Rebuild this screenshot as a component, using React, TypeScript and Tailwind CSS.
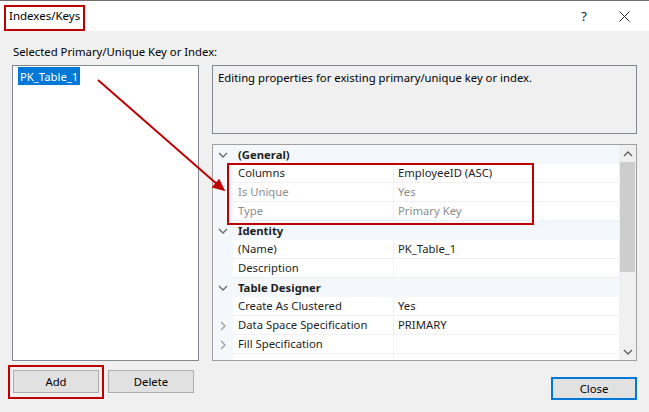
import React from "react";

const font = { fontFamily: '"Noto Sans", "Open Sans", sans-serif' };

function Chevron({ dir, color = "#6d6d6d" }: { dir: "down" | "right" | "up"; color?: string }) {
  const d =
    dir === "down" ? "M1 3 L5 7 L9 3" : dir === "up" ? "M1 7 L5 3 L9 7" : "M3 1 L7 5 L3 9";
  return (
    <svg width="10" height="10" viewBox="0 0 10 10">
      <path d={d} fill="none" stroke={color} strokeWidth="1.4" />
    </svg>
  );
}

function Category({ label }: { label: string }) {
  return (
    <div className="flex h-[19px] items-center bg-[#f4f7fc]">
      <div className="flex w-[20px] justify-center pt-[1px]">
        <Chevron dir="down" />
      </div>
      <span className="pl-[5px] font-bold text-[#1e1e1e]">{label}</span>
    </div>
  );
}

function Prop({
  name,
  value,
  gray,
  expandable,
}: {
  name: string;
  value?: string;
  gray?: boolean;
  expandable?: boolean;
}) {
  const c = gray ? "text-[#8d8d8d]" : "text-[#1e1e1e]";
  return (
    <div className="flex h-[19px]">
      <div className="flex w-[20px] items-center justify-center bg-[#f4f7fc]">
        {expandable && <Chevron dir="right" color="#a0a0a0" />}
      </div>
      <div className={`flex w-[161px] items-center border-b border-r border-[#f0f0f5] bg-white pl-[5px] ${c}`}>
        {name}
      </div>
      <div className={`flex flex-1 items-center border-b border-[#f0f0f5] bg-white pl-[4px] ${c}`}>
        {value}
      </div>
    </div>
  );
}

export default function App() {
  return (
    <div
      className="relative h-[412px] w-[649px] overflow-hidden bg-[#f0f0f0] text-[11.3px] leading-none text-black"
      style={font}
    >
      {/* Title bar */}
      <div className="flex h-[31px] items-center border-t border-[#6e6e6e] bg-white pl-[9px]">
        <span className="text-[11.5px] text-black">Indexes/Keys</span>
        <div className="ml-auto flex items-center">
          <span className="mr-[32px] text-[13px] text-[#222]">?</span>
          <svg width="11" height="11" viewBox="0 0 11 11" className="mr-[19px]">
            <path d="M0.5 0.5 L10.5 10.5 M10.5 0.5 L0.5 10.5" stroke="#222" strokeWidth="1" />
          </svg>
        </div>
      </div>

      {/* Body */}
      <div className="px-[12px] pt-[14px]">
        <div className="pl-[1px] leading-[14px]">Selected Primary/Unique Key or Index:</div>
        <div className="mt-[6px] flex gap-[13px]">
          {/* Left column */}
          <div className="flex w-[187px] flex-col">
            <div className="h-[296px] border border-[#828790] bg-white p-[1px] pl-[5px]">
              <span className="inline-block bg-[#0078d7] px-[2px] py-[3.5px] text-white">PK_Table_1</span>
            </div>
            <div className="mt-[9px] flex gap-[9px] pl-[1px]">
              <button className="h-[23px] w-[86px] border border-[#adadad] bg-[#e1e1e1]">Add</button>
              <button className="h-[23px] w-[86px] border border-[#adadad] bg-[#e1e1e1]">Delete</button>
            </div>
          </div>

          {/* Right column */}
          <div className="flex w-[425px] flex-col">
            <div className="h-[69px] border border-[#828790] bg-[#f0f0f0] px-[5px] pt-[5px] leading-[14px]">
              Editing properties for existing primary/unique key or index.
            </div>
            <div className="mt-[10px] flex h-[217px] border border-[#a0a0a0] bg-white">
              <div className="flex-1 overflow-hidden">
                <Category label="(General)" />
                <Prop name="Columns" value="EmployeeID (ASC)" />
                <Prop name="Is Unique" value="Yes" gray />
                <Prop name="Type" value="Primary Key" gray />
                <Category label="Identity" />
                <Prop name="(Name)" value="PK_Table_1" />
                <Prop name="Description" />
                <Category label="Table Designer" />
                <Prop name="Create As Clustered" value="Yes" />
                <Prop name="Data Space Specification" value="PRIMARY" expandable />
                <Prop name="Fill Specification" expandable />
                <Prop name="" />
              </div>
              <div className="flex w-[17px] flex-col bg-[#f0f0f0]">
                <div className="flex h-[17px] items-center justify-center">
                  <Chevron dir="up" color="#606060" />
                </div>
                <div className="mx-[1px] h-[110px] bg-[#cdcdcd]" />
                <div className="flex-1" />
                <div className="flex h-[17px] items-center justify-center">
                  <Chevron dir="down" color="#606060" />
                </div>
              </div>
            </div>
            <div className="mt-[16px] flex justify-end">
              <button className="h-[23px] w-[86px] border-2 border-[#0078d7] bg-[#e1e1e1]">Close</button>
            </div>
          </div>
        </div>
      </div>

      {/* Annotations */}
      <div className="pointer-events-none absolute left-[4px] top-[5px] h-[26px] w-[81px] border-2 border-[#c00000]" />
      <div className="pointer-events-none absolute left-[227px] top-[163px] h-[62px] w-[307px] border-2 border-[#c00000]" />
      <div className="pointer-events-none absolute left-[8px] top-[365px] h-[34px] w-[96px] border-2 border-[#c00000]" />
      <svg className="pointer-events-none absolute left-0 top-0" width="649" height="412">
        <line x1="98" y1="80" x2="218" y2="185" stroke="#c00000" strokeWidth="2" />
        <path d="M224 190 L213 187 L219 180 Z" fill="#c00000" stroke="#c00000" strokeWidth="1.5" strokeLinejoin="miter" />
      </svg>
    </div>
  );
}
